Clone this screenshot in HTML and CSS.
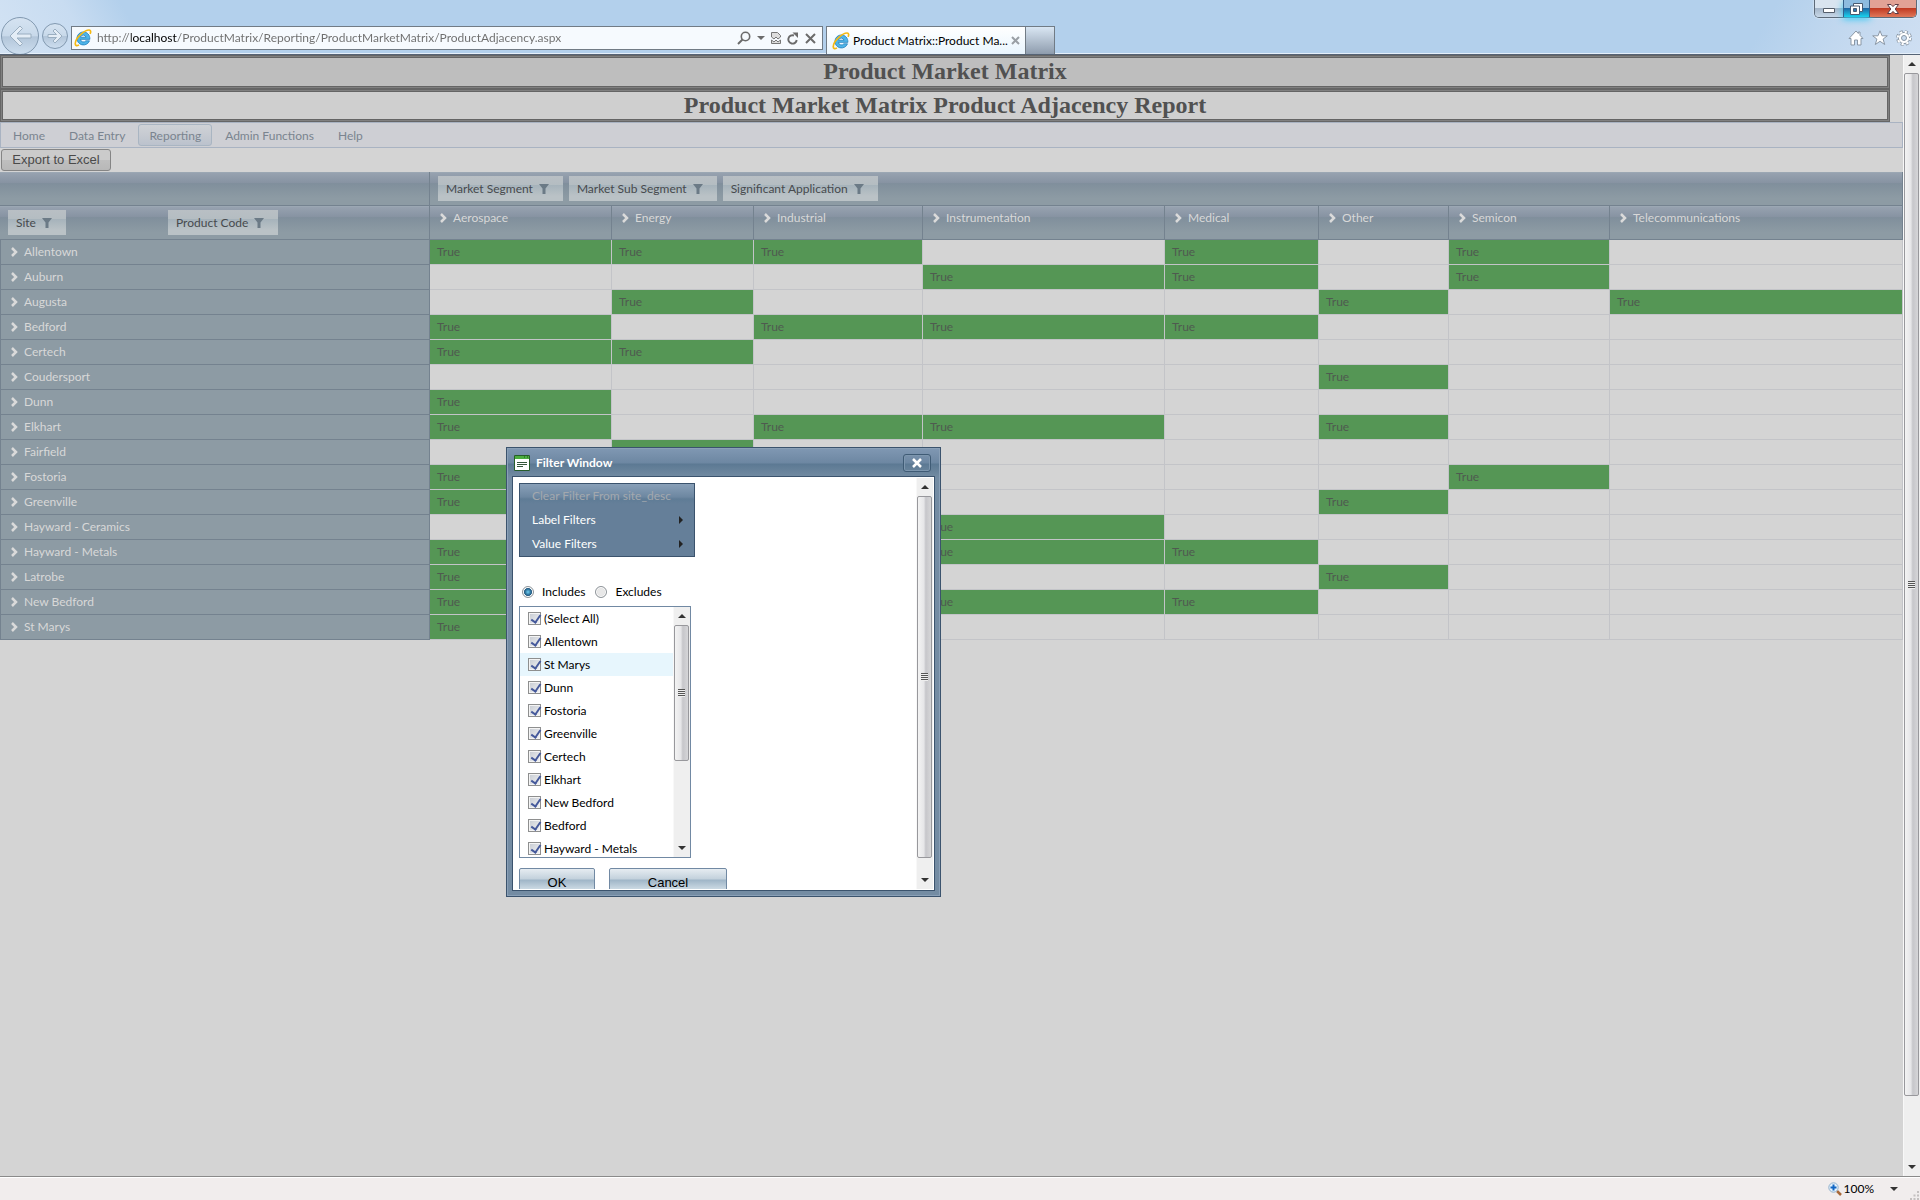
FILE: index.html
```html
<!DOCTYPE html>
<html lang="en">

<head>
    <meta charset="UTF-8">
    <meta name="viewport" content="width=device-width, initial-scale=1.0">
    <title>Product Matrix::Product Market Matrix</title>
    <link rel="stylesheet" href="styles.css">
</head>

<body>
    <!-- shared icons -->
    <svg class="sprite" width="0" height="0">
        <symbol id="ie" viewBox="0 0 16 16">
            <path d="M8.300 2.600a5.800 5.800 0 1 0 5.500 7.900h-3.300a2.700 2.700 0 0 1-4.800-1.300h8.400c.3-3.800-2.400-6.600-5.800-6.600zM5.700 7.300a2.600 2.600 0 0 1 5 0z" fill="#4db4e8" stroke="#1f7dbb" stroke-width=".7" />
            <path d="M14.300 4.300c.9-2 .600-3.300-.8-3.400C9.500.8 1.200 8 1.100 13.200c0 1.800 1.500 2 3.300.9" fill="none" stroke="#f5b912" stroke-width="1.500" />
        </symbol>
        <symbol id="funnel" viewBox="0 0 10 10">
            <path d="M0 0h10L6.500 4.500V10h-3V4.500z" fill="#6b7a86" />
        </symbol>
        <symbol id="chevron" viewBox="0 0 7 10">
            <path d="M1 1l4 4-4 4" fill="none" stroke="#dadada" stroke-width="2.500" />
        </symbol>
    </svg>

    <header class="chrome">
        <div class="nav-btns">
            <button class="back" aria-label="Back">
                <svg width="24" height="22" viewBox="0 0 24 22"><path d="M12 1L2 11l10 10 2.500-2.500L9 13h14V9H9l5.500-5.500z" fill="#e4edf6" stroke="#9aaec0" /></svg>
            </button>
            <button class="forward" aria-label="Forward">
                <svg width="16" height="16" viewBox="0 0 16 16"><path d="M8 1l7 7-7 7-2-2 3.500-3.500H1v-3h8.500L6 3z" fill="#e4edf6" stroke="#9aaec0" /></svg>
            </button>
        </div>
        <div class="address">
            <svg width="18" height="18"><use href="#ie" /></svg>
            <input class="url" type="text" aria-label="Address" value="http://localhost/ProductMatrix/Reporting/ProductMarketMatrix/ProductAdjacency.aspx">
            <div class="address-btns">
                <button aria-label="Search"><svg width="14" height="14" viewBox="0 0 14 14"><circle cx="8.500" cy="5.500" r="4.200" fill="none" stroke="#6b6b6b" stroke-width="1.600" /><path d="M5.500 8.500L1 13" stroke="#6b6b6b" stroke-width="2" /></svg></button>
                <button aria-label="Search options"><svg width="8" height="4" viewBox="0 0 8 4"><path d="M0 0h8L4 4z" fill="#6b6b6b" /></svg></button>
                <button aria-label="Compatibility view"><svg width="10" height="12" viewBox="0 0 10 12"><path d="M.500 5V.500h6l3 3V5L7 7 5 5 3 7zM.500 8L3 10l2-2 2 2 2.500-2v3.500h-9z" fill="#ddd" stroke="#777" /></svg></button>
                <button aria-label="Refresh"><svg width="12" height="13" viewBox="0 0 12 13"><path d="M7 3.500A4.200 4.200 0 1 0 9.700 8" fill="none" stroke="#6b6b6b" stroke-width="1.900" /><path d="M5.500.500h5.500v5.500z" fill="#6b6b6b" /></svg></button>
                <button aria-label="Stop"><svg width="11" height="11" viewBox="0 0 11 11"><path d="M1 1l9 9M10 1l-9 9" stroke="#6b6b6b" stroke-width="2" /></svg></button>
            </div>
        </div>
        <div class="tab">
            <svg width="18" height="18"><use href="#ie" /></svg>
            <span>Product Matrix::Product Ma...</span>
            <button aria-label="Close tab"><svg width="9" height="9" viewBox="0 0 9 9"><path d="M1 1l7 7M8 1L1 8" stroke="#9a9fa5" stroke-width="2" /></svg></button>
        </div>
        <button class="new-tab" aria-label="New tab"></button>
        <div class="chrome-right">
            <div class="win-btns">
                <button class="min" aria-label="Minimize"><svg width="12" height="5" viewBox="0 0 12 5"><path d="M.500.500h11v4H.500z" fill="#fff" stroke="#555e6b" /></svg></button>
                <button class="max" aria-label="Restore"><svg width="13" height="12" viewBox="0 0 13 12"><path d="M3.500.500h9v8h-9z" fill="#fff" stroke="#4a5b70" /><path d="M.500 3h9v8.500h-9z" fill="#fff" stroke="#4a5b70" /><path d="M3.500 5.500h3v3h-3z" fill="#2d78b2" stroke="#4a5b70" /></svg></button>
                <button class="close" aria-label="Close"><svg width="12" height="10" viewBox="0 0 12 10"><path d="M.500.500h3.500L6 2.600 8 .500h3.500L8.200 5l3.300 4.500H8L6 7.400 4 9.500H.500L3.800 5z" fill="#fff" stroke="#5b3a44" /></svg></button>
            </div>
            <div class="tools">
                <button aria-label="Home"><svg width="16" height="16" viewBox="0 0 16 16"><path d="M8 1L1 8.500h2V15h3.500v-5h3v5H13V8.500h2l-3-3.200V2h-1.700v1.500z" fill="#fff" stroke="#8a97a5" /></svg></button>
                <button aria-label="Favorites"><svg width="16" height="16" viewBox="0 0 16 16"><path d="M8 .800l2 5h5.300l-4.200 3.300 1.600 5.400L8 11.300l-4.700 3.200 1.600-5.400L.700 5.800H6z" fill="#fff" stroke="#8a97a5" /></svg></button>
                <button aria-label="Tools"><svg width="16" height="16" viewBox="0 0 16 16"><circle cx="8" cy="8" r="6.400" fill="none" stroke="#8a97a5" stroke-width="3" stroke-dasharray="3 2.030" /><circle cx="8" cy="8" r="5.600" fill="#fff" stroke="#8a97a5" /><circle cx="8" cy="8" r="6.200" fill="none" stroke="#fff" stroke-width="2" stroke-dasharray="2.200 2.670" /><circle cx="8" cy="8" r="2.500" fill="#c9dcf0" stroke="#8a97a5" /></svg></button>
            </div>
        </div>
    </header>

    <main class="viewport">
        <div class="page">
            <h1 class="title">Product Market Matrix</h1>
            <h2 class="title sub-title">Product Market Matrix Product Adjacency Report</h2>
            <nav class="menu">
                <a href="#">Home</a>
                <a href="#">Data Entry</a>
                <a href="#" class="active">Reporting</a>
                <a href="#">Admin Functions</a>
                <a href="#">Help</a>
            </nav>
            <div class="export-bar">
                <button class="export">Export to Excel</button>
            </div>
            <table class="pivot">
                <colgroup>
                    <col class="c-site">
                    <col class="c-aero">
                    <col class="c-energy">
                    <col class="c-ind">
                    <col class="c-inst">
                    <col class="c-med">
                    <col class="c-other">
                    <col class="c-semi">
                    <col>
                </colgroup>
                <thead>
                    <tr class="fields">
                        <td></td>
                        <td colspan="8">
                            <div class="field-row">
                                <button class="field">Market Segment<svg width="10" height="10"><use href="#funnel" /></svg></button>
                                <button class="field">Market Sub Segment<svg width="10" height="10"><use href="#funnel" /></svg></button>
                                <button class="field">Significant Application<svg width="10" height="10"><use href="#funnel" /></svg></button>
                            </div>
                        </td>
                    </tr>
                    <tr class="heads">
                        <td>
                            <div class="field-row split">
                                <div><button class="field">Site<svg width="10" height="10"><use href="#funnel" /></svg></button></div>
                                <div><button class="field">Product Code<svg width="10" height="10"><use href="#funnel" /></svg></button></div>
                            </div>
                        </td>
                    </tr>
                </thead>
                <tbody></tbody>
            </table>
        </div>
        <div class="scroll">
            <i class="arrow up"></i>
            <div class="thumb"><i class="grip"></i></div>
            <i class="arrow down"></i>
        </div>
    </main>

    <footer class="status">
        <svg width="14" height="14" viewBox="0 0 14 14"><path d="M9 9l4 4" stroke="#a8683a" stroke-width="2.500" /><circle cx="5.500" cy="5.500" r="4.700" fill="#e4f1fb" stroke="#8fb0cc" /><path d="M5.500 2.500v6M2.500 5.500h6" stroke="#1166c4" stroke-width="2" /></svg>
        <span>100%</span>
        <i class="arrow down"></i>
        <svg class="resize" width="9" height="9" viewBox="0 0 9 9"><path d="M7 0h2v2H7zM7 3.500h2v2H7zM7 7h2v2H7zM3.500 3.500h2v2h-2zM3.500 7h2v2h-2zM0 7h2v2H0z" fill="#c4c0c0" /></svg>
    </footer>

    <section class="dialog" role="dialog" aria-label="Filter Window">
        <div class="dialog-head">
            <svg width="16" height="16" viewBox="0 0 16 16"><path d="M.500.500h15v15H.500z" fill="#fff" stroke="#275d2b" /><path d="M1 1h14v3H1z" fill="#4cae3f" /><path d="M10 2h1M13 2h1" stroke="#174d1c" /><path d="M3 7.500h10M3 9.500h10M3 11.500h6" stroke="#33563a" /></svg>
            <strong>Filter Window</strong>
            <button class="dialog-close" aria-label="Close window"><svg width="10" height="10" viewBox="0 0 10 10"><path d="M1 1l8 8M9 1L1 9" stroke="#fff" stroke-width="2.500" /></svg></button>
        </div>
        <div class="dialog-body">
            <div class="filter">
                <div class="filter-menu">
                    <button disabled>Clear Filter From site_desc</button>
                    <button>Label Filters<i></i></button>
                    <button>Value Filters<i></i></button>
                </div>
                <div class="mode">
                    <input type="radio" name="mode" id="inc" checked><label for="inc">Includes</label>
                    <input type="radio" name="mode" id="exc"><label for="exc">Excludes</label>
                </div>
                <div class="list">
                    <div class="items"></div>
                    <div class="scroll">
                        <i class="arrow up"></i>
                        <div class="thumb"><i class="grip"></i></div>
                        <i class="arrow down"></i>
                    </div>
                </div>
                <div class="actions">
                    <button class="ok">OK</button>
                    <button class="cancel">Cancel</button>
                </div>
            </div>
            <div class="scroll">
                <i class="arrow up"></i>
                <div class="thumb"><i class="grip"></i></div>
                <i class="arrow down"></i>
            </div>
        </div>
    </section>

    <script>
        (function () {
            const segments = ["Aerospace", "Energy", "Industrial", "Instrumentation", "Medical", "Other", "Semicon", "Telecommunications"]
            // site name, then the indexes of its segments
            const sites = [
                ["Allentown", 0, 1, 2, 4, 6],
                ["Auburn", 3, 4, 6],
                ["Augusta", 1, 5, 7],
                ["Bedford", 0, 2, 3, 4],
                ["Certech", 0, 1],
                ["Coudersport", 5],
                ["Dunn", 0],
                ["Elkhart", 0, 2, 3, 5],
                ["Fairfield", 1],
                ["Fostoria", 0, 6],
                ["Greenville", 0, 5],
                ["Hayward - Ceramics", 3],
                ["Hayward - Metals", 0, 3, 4],
                ["Latrobe", 0, 5],
                ["New Bedford", 0, 3, 4],
                ["St Marys", 0]
            ]
            const options = ["(Select All)", "Allentown", "St Marys", "Dunn", "Fostoria", "Greenville", "Certech", "Elkhart", "New Bedford", "Bedford", "Hayward - Metals"]
            const chevron = '<svg width="7" height="10"><use href="#chevron" /></svg>'

            const heads = document.querySelector(".heads")
            segments.forEach(name => {
                heads.insertAdjacentHTML("beforeend", `<th scope="col">${chevron}${name}</th>`)
            })

            const body = document.querySelector(".pivot tbody")
            sites.forEach(([name, ...on]) => {
                const cells = segments.map((s, i) => on.includes(i) ? '<td class="true">True</td>' : '<td></td>').join("")
                body.insertAdjacentHTML("beforeend", `<tr><th scope="row">${chevron}${name}</th>${cells}</tr>`)
            })

            const items = document.querySelector(".items")
            options.forEach(name => {
                const cls = name === "St Marys" ? "item hover" : "item"
                items.insertAdjacentHTML("beforeend", `<label class="${cls}"><input type="checkbox" checked>${name}</label>`)
            })
        })()
    </script>
</body>

</html>
```
FILE: styles.css
```css
* {
    margin: 0;
    padding: 0;
    box-sizing: border-box;
}

body {
    display: flex;
    flex-direction: column;
    height: 100vh;
    overflow: hidden;
    background-color: #d4d4d4;
    font: 12px/16px Lato, "Open Sans", sans-serif;
    color: #000;
}

button,
input {
    font: inherit;
    border: none;
    background: none;
}

svg {
    display: block;
    flex-shrink: 0;
}

.sprite {
    position: absolute;
}

/* browser frame */
.chrome {
    display: flex;
    align-items: flex-end;
    height: 55px;
    flex-shrink: 0;
    overflow: hidden;
    border-bottom: 1px solid #566476;
    box-shadow: inset 0 -1px #e6f0fa;
    background: linear-gradient(60deg, #d3e3f4, #c8dcf1 80px, #b3d0ec 130px, transparent 160px), linear-gradient(-60deg, #cfdff2, #c2d8ef 80px, #b3d0ec 150px), #b3d0ec;
}

.nav-btns {
    display: flex;
    align-items: center;
    gap: 3px;
    width: 71px;
    height: 36px;
    padding-left: 1px;
}

.nav-btns button {
    display: flex;
    align-items: center;
    justify-content: center;
    border: 1px solid #8299b0;
    border-radius: 50%;
    background: linear-gradient(#d5e3f1, #c8d9ea 50%, #b3c6da 52%, #cddeef);
}

.nav-btns .back {
    width: 38px;
    height: 38px;
}

.nav-btns .forward {
    width: 26px;
    height: 26px;
}

.address {
    display: flex;
    align-items: center;
    gap: 5px;
    width: 752px;
    height: 24px;
    margin-bottom: 4px;
    padding: 0 6px 0 2px;
    border: 1px solid #717b85;
    background-color: #f6fafe;
}

.address-btns {
    display: flex;
    align-items: center;
    gap: 6px;
}

.url {
    flex: 1;
    min-width: 0;
    line-height: 20px;
    outline: none;
    color: transparent;
    /* the host name is darker than the rest of the url */
    background: linear-gradient(90deg, #6d6d6d 34px, #000 34px, #000 80px, #6d6d6d 80px);
    -webkit-background-clip: text;
    background-clip: text;
}

.tab {
    display: flex;
    align-items: center;
    gap: 3px;
    width: 200px;
    height: 28px;
    margin-left: 3px;
    padding: 0 6px 0 5px;
    border: 1px solid #717b85;
    border-bottom: none;
    background: linear-gradient(#fff, #e9f5fe);
}

.tab span {
    flex: 1;
    white-space: nowrap;
}

.new-tab {
    width: 29px;
    height: 28px;
    border: 1px solid #717b85;
    border-width: 1px 1px 0 0;
    background: linear-gradient(#d9e6f3, #8e9cad);
}

.chrome-right {
    display: flex;
    flex-direction: column;
    align-items: flex-end;
    justify-content: space-between;
    height: 54px;
    margin-left: auto;
    padding: 0 3px 8px 0;
}

.win-btns {
    display: flex;
    height: 18px;
    border: 1px solid #5d6a78;
    border-top: none;
    border-radius: 0 0 5px 5px;
    box-shadow: 0 0 2px #fff;
}

.win-btns button {
    display: flex;
    align-items: center;
    justify-content: center;
    height: 17px;
}

.win-btns .min {
    width: 28px;
    padding-top: 3px;
    border-radius: 0 0 0 4px;
    background: linear-gradient(#d9e4ef 50%, #a5b6c9 50%, #c8d8e8);
}

.win-btns .max {
    width: 27px;
    border: 1px solid #35618c;
    border-width: 0 1px;
    background: linear-gradient(#8dbce0 45%, #1d69a6 50%, #19d3ee);
    box-shadow: 0 2px 7px #2cc8f4;
}

.win-btns .close {
    width: 46px;
    border-radius: 0 0 4px 0;
    background: linear-gradient(#e2a295 45%, #c13b22 50%, #e0785a);
}

.tools {
    display: flex;
    gap: 8px;
    padding-right: 5px;
}

/* page */
.viewport {
    display: flex;
    flex: 1;
    min-height: 0;
}

.page {
    flex: 1;
    min-width: 0;
}

.title {
    height: 34px;
    margin-right: 13px;
    padding: 2px;
    border: 1px solid #666;
    box-shadow: inset 0 0 0 1px #808080, inset 0 0 0 2px #656565;
    background-color: #bebebe;
    font: bold 24px/26px "Liberation Serif", "Times New Roman", serif;
    text-align: center;
    color: #515151;
}

.sub-title {
    height: 33px;
    background-color: #cfcfcf;
}

.menu {
    display: flex;
    gap: 2px;
    height: 26px;
    padding: 1px;
    border: 1px solid #a9b3c2;
    background-color: #cecfd4;
}

.menu a {
    padding: 3px 10px;
    height: 22px;
    border: 1px solid transparent;
    border-radius: 3px;
    color: #7a848f;
    text-decoration: none;
}

.menu .active {
    border-color: #a9b5c2;
    background: linear-gradient(#cfd2d6, #c6cad1 50%, #bbc2cd);
}

.export-bar {
    height: 24px;
    padding: 1px;
}

.export {
    display: block;
    width: 110px;
    height: 22px;
    border: 1px solid #858585;
    border-radius: 3px;
    background: linear-gradient(#cbcbcb 50%, #bfbfbf 50%, #b8b8b8);
    font: 13px/18px "Liberation Sans", Arial, sans-serif;
    color: #4a4a4a;
}

.pivot {
    width: 100%;
    table-layout: fixed;
    border-collapse: separate;
    border-spacing: 0;
}

.c-site { width: 430px; }
.c-aero { width: 182px; }
.c-energy { width: 142px; }
.c-ind { width: 169px; }
.c-inst { width: 242px; }
.c-med { width: 154px; }
.c-other { width: 130px; }
.c-semi { width: 161px; }

.pivot thead td,
.pivot thead th {
    height: 34px;
    border: 1px solid #74828f;
    border-width: 0 1px 1px 0;
    background: linear-gradient(#98a3b1, #8793a2 33%, #808f9c 35%, #8d9ba4 80%);
    box-shadow: inset 0 1px #9ba7b3;
    vertical-align: top;
}

.pivot th {
    font-weight: normal;
    text-align: left;
    color: #d8d8d8;
}

.pivot th svg {
    display: inline-block;
    margin-right: 6px;
    vertical-align: -1px;
}

.pivot thead th {
    padding: 4px 10px;
}

.pivot tbody th {
    height: 25px;
    padding: 0 10px;
    border: 1px solid #74828f;
    border-width: 0 1px 1px 1px;
    background-color: #8d9ba4;
}

.pivot tbody td {
    padding: 0 7px;
    border: 1px solid #c3c4c8;
    border-width: 0 1px 1px 0;
    color: #4f5a50;
}

.pivot .true {
    background-color: #559655;
    background-clip: padding-box;
}

.field-row {
    display: flex;
    gap: 6px;
    padding: 4px 8px;
}

.field-row.split {
    gap: 0;
}

.split div {
    flex: 0 0 160px;
}

.field {
    display: flex;
    align-items: center;
    gap: 6px;
    height: 25px;
    padding: 0 14px 0 8px;
    background: linear-gradient(#b9bfc4, #b4bdc2 35%, #a6b3bb 37%, #bac2c6 80%);
    white-space: nowrap;
    color: #474a4d;
}

/* scroll bars */
.scroll {
    display: flex;
    flex-direction: column;
    align-items: center;
    flex-shrink: 0;
    width: 17px;
    padding-right: 1px;
    border-left: 1px solid #f8f8f8;
    background-color: #efefef;
}

.arrow {
    width: 0;
    height: 0;
    border: 4px solid transparent;
}

.arrow.up {
    border-top: none;
    border-bottom-color: #333;
    margin: 7px 0;
}

.arrow.down {
    border-bottom: none;
    border-top-color: #333;
    margin: auto 0 7px;
}

.thumb {
    display: flex;
    align-items: center;
    justify-content: center;
    width: 15px;
    border: 1px solid #98989c;
    border-radius: 2px;
    background: linear-gradient(90deg, #f3f3f3, #e6e6e8 45%, #c6c6ca 60%, #d6d6d8);
}

.grip {
    width: 7px;
    height: 8px;
    background: repeating-linear-gradient(#555 0, #555 1px, #eee 1px, #eee 2px);
}

.viewport > .scroll .thumb {
    height: 1023px;
    flex-shrink: 1;
}

/* status bar */
.status {
    display: flex;
    align-items: center;
    justify-content: flex-end;
    gap: 2px;
    height: 24px;
    flex-shrink: 0;
    padding: 0 1px;
    border-top: 1px solid #8a8a8a;
    box-shadow: inset 0 1px #fff;
    background-color: #f1eded;
}

.status .arrow {
    margin: 0 10px 0 14px;
}

.status .resize {
    align-self: flex-end;
}

/* filter window */
.dialog {
    position: absolute;
    left: 506px;
    top: 447px;
    display: flex;
    flex-direction: column;
    width: 435px;
    height: 450px;
    padding: 0 5px 5px;
    border: 1px solid #3b536d;
    box-shadow: inset 0 0 0 1px #8aa0b7;
    background: linear-gradient(#8098b3, #6d87a2 15px, #5c7993 16px, #748ca3 30px, #748ca3);
}

.dialog-head {
    display: flex;
    align-items: center;
    gap: 6px;
    height: 28px;
    padding: 2px 4px 0 2px;
    color: #fff;
}

.dialog-close {
    display: flex;
    align-items: center;
    justify-content: center;
    width: 28px;
    height: 18px;
    margin-left: auto;
    border: 1px solid #3f5b75;
    border-radius: 3px;
    box-shadow: inset 0 0 0 1px #7d96ae;
}

.dialog-body {
    display: flex;
    flex: 1;
    min-height: 0;
    padding: 1px 1px 1px 0;
    border: 1px solid #3b536d;
    background-color: #fff;
    overflow: hidden;
}

.filter {
    flex: 1;
    padding: 5px 6px;
    overflow: hidden;
}

.filter-menu {
    width: 176px;
    height: 74px;
    border: 1px solid #3b536d;
    background: linear-gradient(#89a0b8, #6d87a1 13px, #5f7c96 15px, #657f99 20px);
}

.filter-menu button {
    display: flex;
    align-items: center;
    justify-content: space-between;
    width: 100%;
    height: 24px;
    padding: 0 11px 0 12px;
    color: #fff;
}

.filter-menu button:disabled {
    color: #a3a8ae;
}

.filter-menu i {
    border: 4px solid transparent;
    border-left-color: #222;
    border-right: none;
}

.mode {
    display: flex;
    align-items: center;
    height: 24px;
    margin-top: 23px;
    padding-left: 3px;
}

.mode input {
    appearance: none;
    width: 12px;
    height: 12px;
    margin-right: 8px;
    border: 1px solid #8e9499;
    border-radius: 50%;
    background: radial-gradient(#e8e8e8 3px, #d0d0d0);
    box-shadow: inset 0 0 0 1px #fff;
}

.mode input:checked {
    background: radial-gradient(circle at 5px 5px, #6fd0f4, #134a74 4px, #dfe8ee 4px);
}

.mode label {
    margin-right: 10px;
}

.list {
    display: flex;
    width: 172px;
    height: 252px;
    margin-top: 2px;
    border: 1px solid #7189a3;
    overflow: hidden;
}

.items {
    flex: 1;
}

.item {
    display: flex;
    align-items: center;
    gap: 3px;
    height: 23px;
    padding-left: 8px;
}

.item.hover {
    background-color: #e7f6fd;
}

.item input {
    appearance: none;
    width: 13px;
    height: 13px;
    border: 1px solid #8e8f8f;
    background: linear-gradient(135deg, #c5cad2, #f4f4f4);
    box-shadow: inset 0 0 0 1px #f4f4f4;
}

/* tick */
.item input:checked::before {
    content: "";
    display: block;
    width: 4px;
    height: 8px;
    margin: 0 0 0 4px;
    border: solid #45599b;
    border-width: 0 2px 2px 0;
    transform: rotate(35deg);
}

.list .thumb {
    height: 136px;
}

.dialog-body > .scroll .thumb {
    height: 362px;
}

.actions {
    display: flex;
    gap: 14px;
    margin-top: 10px;
}

.actions button {
    height: 30px;
    border: 1px solid #7189a3;
    border-radius: 2px;
    background: linear-gradient(#e6ecf1, #c3d1dc 10px, #9fb5c7 11px, #d5e1e9 22px);
    font: 13px/16px "Liberation Sans", Arial, sans-serif;
}

.actions .ok {
    width: 76px;
}

.actions .cancel {
    width: 118px;
}
```
